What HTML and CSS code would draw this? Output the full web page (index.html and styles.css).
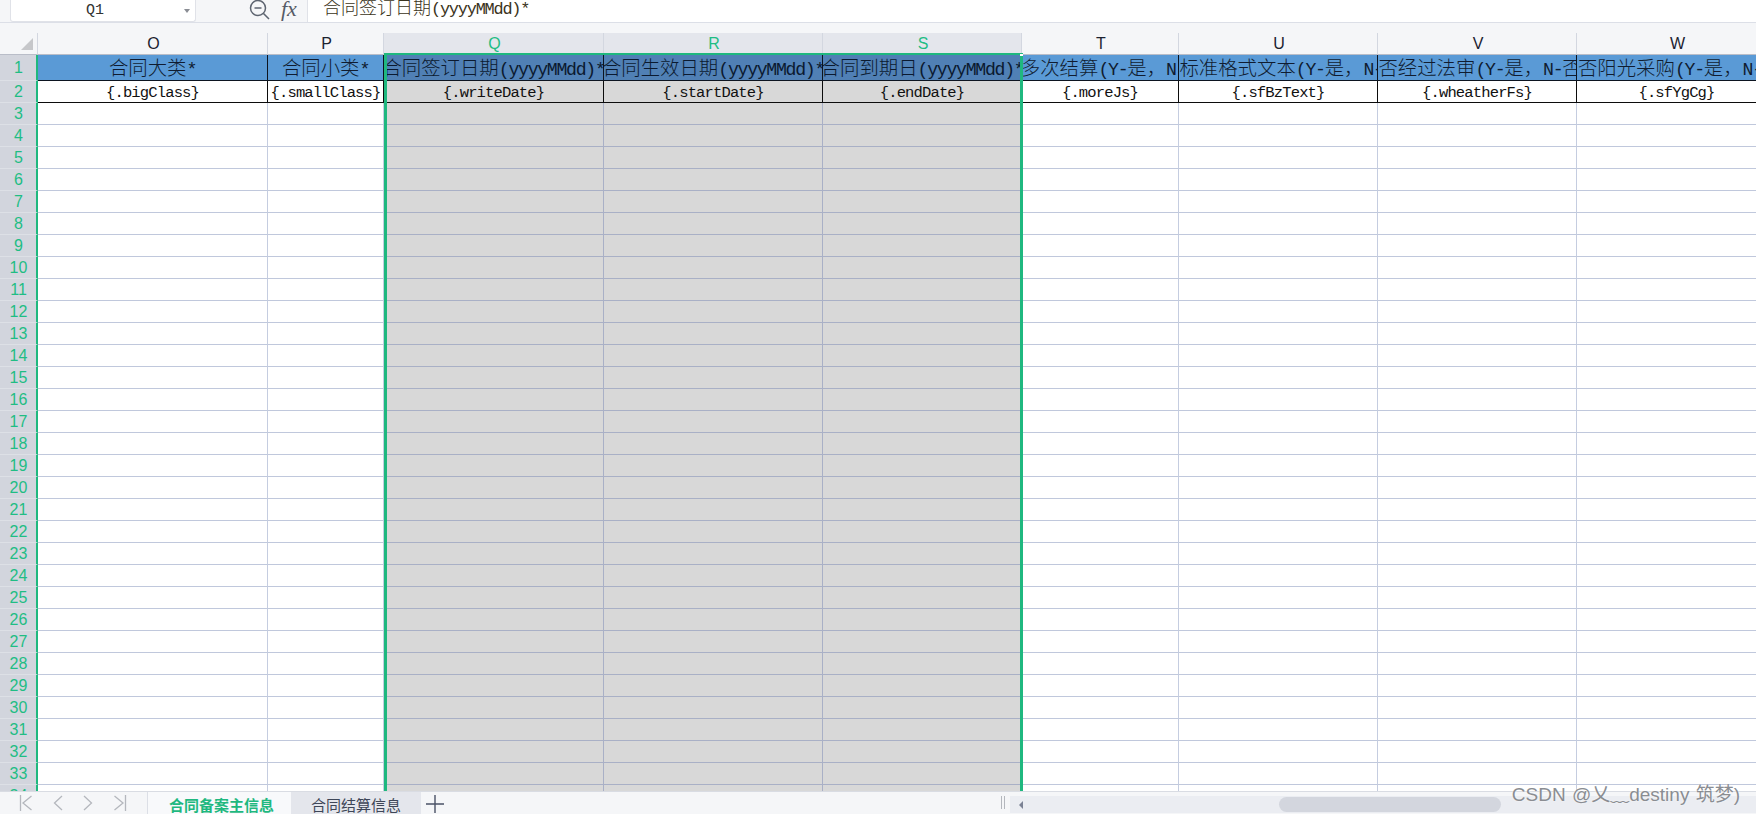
FILE: index.html
```html
<!DOCTYPE html>
<html lang="zh-CN">
<head>
    <meta charset="UTF-8">
    <title>合同备案主信息</title>
    <link rel="stylesheet" href="styles.css">
</head>
<body>
    <div class="formula-bar">
        <div class="name-box">
            <span class="name-ref">Q1</span>
            <span class="name-caret"></span>
        </div>
        <div class="formula-tools">
            <svg class="zoom-icon" width="22" height="20" viewBox="0 0 22 20">
                <circle cx="9" cy="8" r="7.5" fill="none" stroke="#5d6470" stroke-width="1.5"/>
                <path d="M5.5 8h7M14.5 13.5l5.5 5.5" fill="none" stroke="#5d6470" stroke-width="1.5"/>
            </svg>
            <span class="fx">fx</span>
        </div>
        <div class="formula-input">合同签订日期<span class="hw">(yyyyMMdd)*</span></div>
    </div>

    <div class="sheet">
        <table class="grid">
            <colgroup>
                <col class="col-head">
                <col class="col-o">
                <col class="col-p">
                <col class="col-q">
                <col class="col-r">
                <col class="col-s">
                <col class="col-t">
                <col class="col-u">
                <col class="col-v">
                <col class="col-w">
            </colgroup>
            <thead>
                <tr>
                    <th class="corner">
                        <svg width="12" height="12" viewBox="0 0 12 12"><path d="M12 0v12H0z" fill="#c6c7ca"/></svg>
                    </th>
                    <th>O</th><th>P</th><th>Q</th><th>R</th><th>S</th><th>T</th><th>U</th><th>V</th><th>W</th>
                </tr>
            </thead>
            <tbody>
                <tr class="title-row">
                    <th>1</th>
                    <td><div class="clip"><span>合同大类<span class="hw">*</span></span></div></td>
                    <td><div class="clip"><span>合同小类<span class="hw">*</span></span></div></td>
                    <td><div class="clip"><span>合同签订日期<span class="hw">(yyyyMMdd)*</span></span></div></td>
                    <td><div class="clip"><span>合同生效日期<span class="hw">(yyyyMMdd)*</span></span></div></td>
                    <td><div class="clip"><span>合同到期日<span class="hw">(yyyyMMdd)*</span></span></div></td>
                    <td><div class="clip"><span>是否多次结算<span class="hw">(Y-</span>是，<span class="hw">N-</span>否<span class="hw">)*</span></span></div></td>
                    <td><div class="clip"><span>是否标准格式文本<span class="hw">(Y-</span>是，<span class="hw">N-</span>否<span class="hw">)*</span></span></div></td>
                    <td><div class="clip"><span>是否经过法审<span class="hw">(Y-</span>是，<span class="hw">N-</span>否<span class="hw">)*</span></span></div></td>
                    <td><div class="clip"><span>是否阳光采购<span class="hw">(Y-</span>是，<span class="hw">N-</span>否<span class="hw">)*</span></span></div></td>
                </tr>
                <tr class="field-row">
                    <th>2</th>
                    <td>{.bigClass}</td>
                    <td>{.smallClass}</td>
                    <td>{.writeDate}</td>
                    <td>{.startDate}</td>
                    <td>{.endDate}</td>
                    <td>{.moreJs}</td>
                    <td>{.sfBzText}</td>
                    <td>{.wheatherFs}</td>
                    <td>{.sfYgCg}</td>
                </tr>
                <tr><th>3</th><td></td><td></td><td></td><td></td><td></td><td></td><td></td><td></td><td></td></tr>
                <tr><th>4</th><td></td><td></td><td></td><td></td><td></td><td></td><td></td><td></td><td></td></tr>
                <tr><th>5</th><td></td><td></td><td></td><td></td><td></td><td></td><td></td><td></td><td></td></tr>
                <tr><th>6</th><td></td><td></td><td></td><td></td><td></td><td></td><td></td><td></td><td></td></tr>
                <tr><th>7</th><td></td><td></td><td></td><td></td><td></td><td></td><td></td><td></td><td></td></tr>
                <tr><th>8</th><td></td><td></td><td></td><td></td><td></td><td></td><td></td><td></td><td></td></tr>
                <tr><th>9</th><td></td><td></td><td></td><td></td><td></td><td></td><td></td><td></td><td></td></tr>
                <tr><th>10</th><td></td><td></td><td></td><td></td><td></td><td></td><td></td><td></td><td></td></tr>
                <tr><th>11</th><td></td><td></td><td></td><td></td><td></td><td></td><td></td><td></td><td></td></tr>
                <tr><th>12</th><td></td><td></td><td></td><td></td><td></td><td></td><td></td><td></td><td></td></tr>
                <tr><th>13</th><td></td><td></td><td></td><td></td><td></td><td></td><td></td><td></td><td></td></tr>
                <tr><th>14</th><td></td><td></td><td></td><td></td><td></td><td></td><td></td><td></td><td></td></tr>
                <tr><th>15</th><td></td><td></td><td></td><td></td><td></td><td></td><td></td><td></td><td></td></tr>
                <tr><th>16</th><td></td><td></td><td></td><td></td><td></td><td></td><td></td><td></td><td></td></tr>
                <tr><th>17</th><td></td><td></td><td></td><td></td><td></td><td></td><td></td><td></td><td></td></tr>
                <tr><th>18</th><td></td><td></td><td></td><td></td><td></td><td></td><td></td><td></td><td></td></tr>
                <tr><th>19</th><td></td><td></td><td></td><td></td><td></td><td></td><td></td><td></td><td></td></tr>
                <tr><th>20</th><td></td><td></td><td></td><td></td><td></td><td></td><td></td><td></td><td></td></tr>
                <tr><th>21</th><td></td><td></td><td></td><td></td><td></td><td></td><td></td><td></td><td></td></tr>
                <tr><th>22</th><td></td><td></td><td></td><td></td><td></td><td></td><td></td><td></td><td></td></tr>
                <tr><th>23</th><td></td><td></td><td></td><td></td><td></td><td></td><td></td><td></td><td></td></tr>
                <tr><th>24</th><td></td><td></td><td></td><td></td><td></td><td></td><td></td><td></td><td></td></tr>
                <tr><th>25</th><td></td><td></td><td></td><td></td><td></td><td></td><td></td><td></td><td></td></tr>
                <tr><th>26</th><td></td><td></td><td></td><td></td><td></td><td></td><td></td><td></td><td></td></tr>
                <tr><th>27</th><td></td><td></td><td></td><td></td><td></td><td></td><td></td><td></td><td></td></tr>
                <tr><th>28</th><td></td><td></td><td></td><td></td><td></td><td></td><td></td><td></td><td></td></tr>
                <tr><th>29</th><td></td><td></td><td></td><td></td><td></td><td></td><td></td><td></td><td></td></tr>
                <tr><th>30</th><td></td><td></td><td></td><td></td><td></td><td></td><td></td><td></td><td></td></tr>
                <tr><th>31</th><td></td><td></td><td></td><td></td><td></td><td></td><td></td><td></td><td></td></tr>
                <tr><th>32</th><td></td><td></td><td></td><td></td><td></td><td></td><td></td><td></td><td></td></tr>
                <tr><th>33</th><td></td><td></td><td></td><td></td><td></td><td></td><td></td><td></td><td></td></tr>
                <tr><th>34</th><td></td><td></td><td></td><td></td><td></td><td></td><td></td><td></td><td></td></tr>
            </tbody>
        </table>
        <!-- selection box over columns Q to S -->
        <div class="selection"><span class="fill-handle"></span></div>
    </div>

    <div class="tab-bar">
        <div class="tab-nav">
            <svg width="14" height="16" viewBox="0 0 14 16"><path d="M1.5 0v16M12.5 1L4 8l8.5 7" fill="none" stroke="#b4b7bd" stroke-width="1.3"/></svg>
            <svg width="10" height="16" viewBox="0 0 10 16"><path d="M9 1L1.5 8 9 15" fill="none" stroke="#b4b7bd" stroke-width="1.3"/></svg>
            <svg width="10" height="16" viewBox="0 0 10 16"><path d="M1 1l7.5 7L1 15" fill="none" stroke="#b4b7bd" stroke-width="1.3"/></svg>
            <svg width="14" height="16" viewBox="0 0 14 16"><path d="M12.5 0v16M1.5 1L10 8l-8.5 7" fill="none" stroke="#b4b7bd" stroke-width="1.3"/></svg>
        </div>
        <div class="tab tab-active">合同备案主信息</div>
        <div class="tab">合同结算信息</div>
        <svg class="tab-add" width="18" height="18" viewBox="0 0 18 18"><path d="M9 0v18M0 9h18" fill="none" stroke="#4a5266" stroke-width="1.4"/></svg>
        <div class="splitter"></div>
        <div class="h-scroll">
            <span class="scroll-arrow"></span>
            <span class="scroll-thumb"></span>
        </div>
    </div>

    <div class="watermark">CSDN @乂﹏destiny 筑梦)</div>
</body>
</html>
```

FILE: styles.css
```css
html, body {
    margin: 0;
    padding: 0;
}
body {
    position: relative;
    display: flex;
    flex-direction: column;
    height: 814px;
    overflow: hidden;
    background-color: #f5f6f8;
    font-family: "Liberation Sans", "Noto Sans CJK SC", sans-serif;
}

/* half-width latin inside chinese text, same advance as SimSun */
.hw {
    font-family: "Liberation Mono", monospace;
    font-size: 0.94em;
    letter-spacing: -0.072em;
}

/* formula bar */
.formula-bar {
    display: flex;
    align-items: flex-start;
    height: 22px;
    flex: none;
    margin-bottom: 11px;
    padding-left: 10px;
    box-shadow: 0 1px 0 #dcdfe7;
}
.name-box {
    display: flex;
    align-items: center;
    box-sizing: border-box;
    width: 186px;
    height: 22px;
    padding-left: 75px;
    background-color: #fff;
    border: 1px solid #e0e2e8;
    border-top: 0;
    border-radius: 0 0 3px 3px;
    font-family: "Liberation Mono", monospace;
    font-size: 15px;
    color: #333;
}
.name-ref {
    flex: 1;
}
.name-caret {
    width: 0;
    height: 0;
    margin-right: 5px;
    border-left: 3px solid transparent;
    border-right: 3px solid transparent;
    border-top: 4px solid #8a8d94;
}
.formula-tools {
    display: flex;
    align-items: flex-start;
    gap: 10px;
    width: 111px;
    box-sizing: border-box;
    padding-left: 53px;
}
.zoom-icon {
    flex: none;
}
.fx {
    font-family: "Liberation Serif", serif;
    font-style: italic;
    font-size: 22px;
    line-height: 18px;
    color: #555b66;
}
.formula-input {
    flex: 1;
    box-sizing: border-box;
    height: 22px;
    padding-left: 15px;
    background-color: #fff;
    border-left: 1px solid #e0e2e8;
    font-family: "Noto Sans CJK SC", sans-serif;
    font-weight: 300;
    font-size: 18px;
    line-height: 12px;
    color: #3a3320;
    white-space: nowrap;
}

/* sheet */
.sheet {
    position: relative;
    flex: 1;
    overflow: hidden;
    background-color: #fff;
}
.grid {
    table-layout: fixed;
    border-collapse: separate;
    border-spacing: 0;
    width: 1777px;
}
.col-head { width: 38px; }
.col-o { width: 230px; }
.col-p { width: 116px; }
.col-q { width: 220px; }
.col-r { width: 219px; }
.col-s { width: 199px; }
.col-t { width: 157px; }
.col-u { width: 199px; }
.col-v { width: 199px; }
.col-w { width: 200px; }

thead th {
    box-sizing: border-box;
    height: 22px;
    padding: 1px 0 0 2px;
    background-color: #f5f6f8;
    border-right: 1px solid #d3d7e0;
    border-bottom: 1px solid #b9bdc8;
    font-size: 16px;
    font-weight: normal;
    color: #1c2230;
}
thead th:nth-child(n+4):nth-child(-n+6) {
    background-color: #e4e6ec;
    color: #1fbd84;
}
th.corner {
    padding: 5px 4px 0 0;
    text-align: right;
    vertical-align: top;
    line-height: 0;
}
tbody th {
    box-sizing: border-box;
    padding: 1px 0 0 1px;
    background-color: #d2d5dd;
    border-right: 2px solid #1fb87f;
    border-bottom: 1px solid #dde0e6;
    font-size: 16px;
    font-weight: normal;
    color: #1fbd84;
}
tbody tr {
    height: 22px;
}
td {
    box-sizing: border-box;
    padding: 0;
    border-right: 1px solid #c5cde0;
    border-bottom: 1px solid #c0c8dc;
    text-align: center;
}
td:nth-child(n+4):nth-child(-n+6) {
    background-color: #d8d8d8;
    border-right-color: #a9b0c6;
    border-bottom-color: #a9b0c6;
}

.title-row {
    height: 26px;
}
.title-row td {
    background-color: #5a9ad6;
    border-right-color: #0c1420;
    border-bottom-color: #0c1420;
    font-family: "Noto Sans CJK SC", sans-serif;
    font-weight: 300;
    font-size: 19.4px;
    color: #101c30;
}
.title-row td:nth-child(n+4):nth-child(-n+6) {
    background-color: #5080b5;
    border-right-color: #0c1420;
    border-bottom-color: #0c1420;
    color: #0b1a30;
}
.clip {
    display: flex;
    justify-content: center;
    overflow: hidden;
    height: 25px;
    line-height: 23px;
    white-space: nowrap;
}
.clip > span {
    flex: none;
}
/* the long Y/N titles sit a little to the right */
.title-row td:nth-child(n+7) .clip {
    padding-left: 6px;
}

.field-row td,
.field-row td:nth-child(n+4):nth-child(-n+6) {
    padding-top: 2px;
    border-right-color: #0c0c0c;
    border-bottom-color: #0c0c0c;
    font-family: "Liberation Mono", monospace;
    font-size: 15.5px;
    letter-spacing: -0.85px;
    color: #111;
}

.selection {
    position: absolute;
    left: 384px;
    top: 20px;
    width: 639px;
    bottom: 0;
    box-sizing: border-box;
    border: 3px solid #1fb87f;
    border-top-width: 2px;
    border-bottom: 0;
}
.fill-handle {
    position: absolute;
    right: -3px;
    top: -1px;
    width: 3px;
    height: 2px;
    background-color: #fff;
}

/* sheet tabs and scrollbar */
.tab-bar {
    display: flex;
    align-items: stretch;
    flex: none;
    box-sizing: border-box;
    height: 23px;
    border-top: 1px solid #d9dce3;
}
.tab-nav {
    display: flex;
    align-items: center;
    gap: 20px;
    box-sizing: border-box;
    width: 148px;
    padding-left: 19px;
    border-right: 1px solid #dcdfe6;
}
.tab {
    padding: 0 20px;
    background-color: #e4e6ec;
    font-size: 15px;
    line-height: 28px;
    color: #3e4658;
    white-space: nowrap;
}
.tab-active {
    width: 143px;
    box-sizing: border-box;
    padding-left: 21px;
    background-color: #f8f9fb;
    font-weight: bold;
    color: #1fb87f;
}
.tab-add {
    flex: none;
    margin: 3px 0 0 5px;
}
.splitter {
    flex: none;
    width: 2px;
    height: 13px;
    margin: 4px 0 0 557px;
    border-left: 1px solid #b4b7bd;
    border-right: 1px solid #b4b7bd;
}
.h-scroll {
    position: relative;
    flex: 1;
    margin: 4px 0 1px 5px;
    background-color: #ebedf2;
}
.scroll-arrow {
    position: absolute;
    left: 9px;
    top: 5px;
    width: 0;
    height: 0;
    border-top: 4px solid transparent;
    border-bottom: 4px solid transparent;
    border-right: 4px solid #7b8294;
}
.scroll-thumb {
    position: absolute;
    left: 269px;
    top: 1px;
    width: 222px;
    bottom: 1px;
    background-color: #d3d6de;
    border-radius: 8px;
}

.watermark {
    position: absolute;
    right: 16px;
    bottom: 8px;
    font-size: 19px;
    line-height: 22px;
    word-spacing: 1px;
    color: #8a8d92;
    text-shadow: 0 0 2px rgba(255, 255, 255, 0.9);
    white-space: nowrap;
}
```
